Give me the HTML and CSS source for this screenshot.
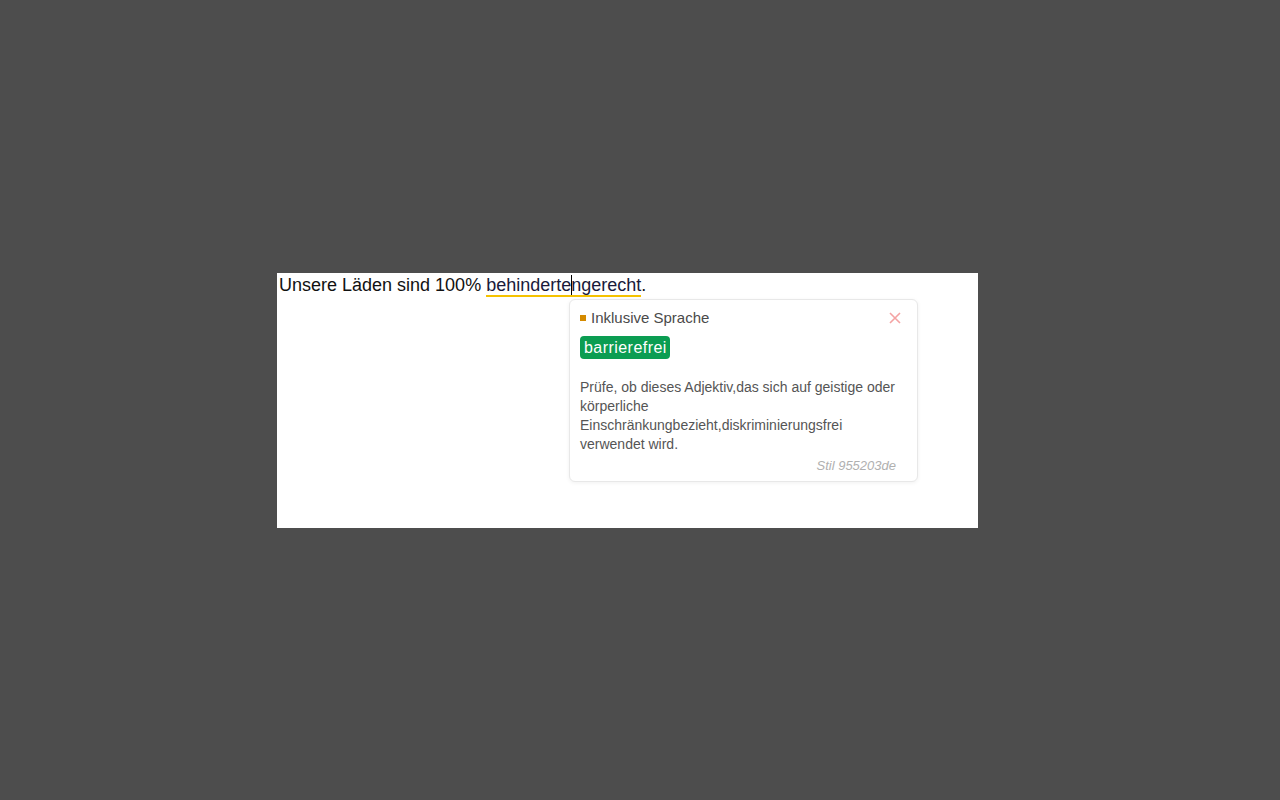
FILE: index.html
```html
<!DOCTYPE html>
<html lang="de">
<head>
<meta charset="utf-8">
<title>Inklusive Sprache</title>
<link rel="stylesheet" href="styles.css">
</head>
<body>
<div class="stage">
  <div class="editor">
    <p class="line">Unsere Läden sind 100% <span class="flag">behinderte<span class="caret"></span>ngerecht</span>.</p>
    <div class="popup">
      <div class="popup-head">
        <span class="dot"></span>
        <span class="title">Inklusive Sprache</span>
        <span class="close">
          <svg width="12" height="12" viewBox="0 0 12 12"><path d="M1 1L11 11M11 1L1 11" stroke="#f4a3a3" stroke-width="1.6" fill="none"/></svg>
        </span>
      </div>
      <div class="suggest"><span class="badge">barrierefrei</span></div>
      <p class="desc">Prüfe, ob dieses Adjektiv,das sich auf geistige oder körperliche Einschränkungbezieht,diskriminierungsfrei verwendet wird.</p>
      <div class="foot">Stil 955203de</div>
    </div>
  </div>
</div>
</body>
</html>
```
FILE: styles.css
```css
html, body {
  margin: 0;
  padding: 0;
  background: #4d4d4d;
  height: 100%;
}
.stage {
  width: 1280px;
  height: 800px;
  padding-top: 273px;
  padding-left: 277px;
  box-sizing: border-box;
}
.editor {
  position: relative;
  width: 701px;
  height: 255px;
  background: #fff;
  font-family: "Liberation Sans", Arial, sans-serif;
}
.line {
  margin: 0;
  padding: 1px 0 0 2px;
  font-size: 18px;
  line-height: 22px;
  color: #111;
}
.flag {
  position: relative;
  color: #1a1a3a;
  border-bottom: 2px solid #f5c200;
  padding-bottom: 0;
}
.caret {
  display: inline-block;
  width: 1px;
  height: 20px;
  background: #000;
  vertical-align: -4px;
  margin-right: -1px;
}
.popup {
  position: absolute;
  left: 292px;
  top: 26px;
  width: 349px;
  box-sizing: border-box;
  background: #fff;
  border: 1px solid #e8e8e8;
  border-radius: 6px;
  box-shadow: 0 1px 4px rgba(0,0,0,0.06);
  padding: 8px 10px 7px 10px;
}
.popup-head {
  display: flex;
  align-items: center;
  height: 18px;
}
.dot {
  width: 6px;
  height: 6px;
  background: #d48a00;
  margin-right: 5px;
  margin-top: 2px;
}
.title {
  font-size: 15px;
  color: #4a4a4a;
  flex: 1;
}
.close {
  display: flex;
  margin-right: 6px;
  margin-top: 1px;
}
.suggest {
  margin-top: 10px;
  display: flex;
}
.badge {
  background: #0b9d52;
  color: #fff;
  font-size: 16px;
  letter-spacing: 0.45px;
  line-height: 23px;
  padding: 0 3px 0 4px;
  border-radius: 4px;
}
.desc {
  margin: 19px 0 0 0;
  font-size: 14px;
  line-height: 19px;
  color: #555;
  width: 325px;
}
.foot {
  text-align: right;
  font-size: 13px;
  font-style: italic;
  color: #b0b0b0;
  margin-top: 4px;
  padding-right: 11px;
  line-height: 16px;
}
```
